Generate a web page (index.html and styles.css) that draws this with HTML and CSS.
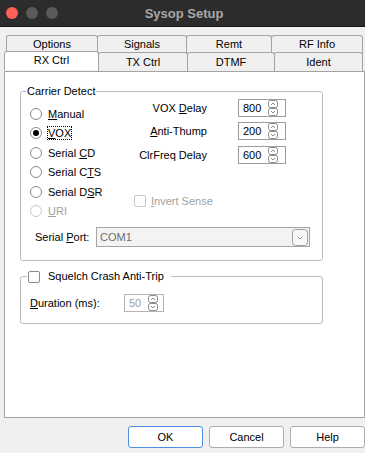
FILE: index.html
```html
<!DOCTYPE html>
<html lang="en">
<head>
    <meta charset="UTF-8">
    <title>Sysop Setup</title>
    <link rel="stylesheet" href="styles.css">
</head>
<body>
<div class="titlebar">
    <div class="lights">
        <span class="light red"></span>
        <span class="light"></span>
        <span class="light"></span>
    </div>
    <div class="title">Sysop Setup</div>
</div>

<div class="tabs">
    <div class="tab-row back">
        <div class="tab w-options">Options</div>
        <div class="tab w-signals">Signals</div>
        <div class="tab w-remt">Remt</div>
        <div class="tab w-rfinfo">RF Info</div>
    </div>
    <div class="tab-row front">
        <div class="tab active w-rx">RX Ctrl</div>
        <div class="tab w-tx">TX Ctrl</div>
        <div class="tab w-dtmf">DTMF</div>
        <div class="tab w-ident">Ident</div>
    </div>
</div>

<div class="panel">
    <fieldset class="group carrier">
        <legend>Carrier Detect</legend>
        <div class="cd-body">
            <div class="radios">
                <div class="radio-row"><span class="radio"></span><span><u>M</u>anual</span></div>
                <div class="radio-row"><span class="radio on"></span><span class="focus"><u>V</u>OX</span></div>
                <div class="radio-row"><span class="radio"></span><span>Serial <u>C</u>D</span></div>
                <div class="radio-row"><span class="radio"></span><span>Serial C<u>T</u>S</span></div>
                <div class="radio-row"><span class="radio"></span><span>Serial D<u>S</u>R</span></div>
                <div class="radio-row disabled"><span class="radio"></span><span><u>U</u>RI</span></div>
            </div>
            <div class="delays">
                <div class="delay-row">
                    <span class="delay-label">VOX <u>D</u>elay</span>
                    <div class="spin"><span>800</span><svg class="arrows" width="10" height="16" viewBox="0 0 10 16"><rect x="0.5" y="0.5" width="9" height="7" rx="2"/><rect x="0.5" y="8.5" width="9" height="7" rx="2"/><path d="M3 5l2-2 2 2M3 11l2 2 2-2"/></svg></div>
                </div>
                <div class="delay-row">
                    <span class="delay-label"><u>A</u>nti-Thump</span>
                    <div class="spin"><span>200</span><svg class="arrows" width="10" height="16" viewBox="0 0 10 16"><rect x="0.5" y="0.5" width="9" height="7" rx="2"/><rect x="0.5" y="8.5" width="9" height="7" rx="2"/><path d="M3 5l2-2 2 2M3 11l2 2 2-2"/></svg></div>
                </div>
                <div class="delay-row">
                    <span class="delay-label">ClrFreq Delay</span>
                    <div class="spin"><span>600</span><svg class="arrows" width="10" height="16" viewBox="0 0 10 16"><rect x="0.5" y="0.5" width="9" height="7" rx="2"/><rect x="0.5" y="8.5" width="9" height="7" rx="2"/><path d="M3 5l2-2 2 2M3 11l2 2 2-2"/></svg></div>
                </div>
                <div class="check-row disabled invert"><span class="check"></span><span><u>I</u>nvert Sense</span></div>
            </div>
        </div>
        <div class="port-row">
            <span class="port-label">Serial <u>P</u>ort:</span>
            <div class="combo">
                <span>COM1</span>
                <svg class="drop" width="16" height="17" viewBox="0 0 16 17"><rect x="0.5" y="0.5" width="15" height="16" rx="3"/><path d="M5.5 7.5l2.5 2.5 2.5-2.5"/></svg>
            </div>
        </div>
    </fieldset>

    <fieldset class="group squelch">
        <legend><span class="check"></span><span>Squelch Crash Anti-Trip</span></legend>
        <div class="duration-row">
            <span class="duration-label"><u>D</u>uration (ms):</span>
            <div class="spin small disabled"><span>50</span><svg class="arrows" width="10" height="16" viewBox="0 0 10 16"><rect x="0.5" y="0.5" width="9" height="7" rx="2"/><rect x="0.5" y="8.5" width="9" height="7" rx="2"/><path d="M3 5l2-2 2 2M3 11l2 2 2-2"/></svg></div>
        </div>
    </fieldset>
</div>

<div class="buttons">
    <div class="btn default">OK</div>
    <div class="btn">Cancel</div>
    <div class="btn">Help</div>
</div>
</body>
</html>
```

FILE: styles.css
```css
* {
    margin: 0;
    padding: 0;
    box-sizing: border-box;
}

body {
    width: 365px;
    height: 453px;
    overflow: hidden;
    background-color: #f0f0f0;
    font: 11px "Liberation Sans", Arial, sans-serif;
    color: #000;
}

u {
    text-decoration: underline;
    text-underline-offset: 1px;
}

/* window title bar */
.titlebar {
    height: 27px;
    background-color: #2c2c2c;
    border-bottom: 1px solid #171717;
    display: grid;
    grid-template-columns: 1fr auto 1fr;
    align-items: center;
}

.lights {
    display: flex;
    gap: 8px;
    padding-left: 6px;
}

.light {
    width: 12px;
    height: 12px;
    border-radius: 50%;
    background-color: #5a5a5a;
}

.light.red {
    background-color: #fe5f57;
}

.title {
    font: bold 13px "Liberation Sans", Arial, sans-serif;
    color: #a8a8a8;
    padding-left: 3px;
}

/* tabs */
.tabs {
    padding: 8px 0 0 4px;
}

.tab-row {
    display: flex;
}

.tab-row.back {
    height: 17px;
    padding-left: 2px;
}

.tab-row.front {
    height: 19px;
    align-items: flex-start;
}

.tab {
    height: 18px;
    border: 1px solid #a3a3a3;
    border-bottom: none;
    border-radius: 3px 3px 0 0;
    background-color: #f0f0f0;
    display: flex;
    align-items: center;
    justify-content: center;
}

.tab-row.back .tab {
    padding-bottom: 1px;
}

.tab-row.front .tab {
    height: 19px;
}

.tab + .tab {
    margin-left: -1px;
}

.tab.active {
    height: 21px;
    margin-top: -1px;
    background-color: #fff;
    position: relative;
    z-index: 1;
    padding-bottom: 2px;
}

.w-options { width: 92px; }
.w-signals { width: 90px; }
.w-remt { width: 86px; }
.w-rfinfo { width: 92px; }
.w-rx { width: 95px; }
.w-tx { width: 90px; }
.w-dtmf { width: 88px; }
.w-ident { width: 89px; }

/* tab page */
.panel {
    width: 361px;
    height: 347px;
    margin-left: 4px;
    background-color: #fff;
    border: 1px solid #a3a3a3;
    padding-top: 13px;
}

.group {
    width: 303px;
    margin-left: 15px;
    border: 1px solid #bcbcbc;
    border-radius: 3px;
    padding: 0;
}

.group legend {
    margin-left: 5px;
    padding: 0 1px;
    line-height: 13px;
}

.cd-body {
    display: flex;
}

.radios {
    width: 100px;
    padding: 6px 0 0 9px;
}

.radio-row {
    height: 19.5px;
    display: flex;
    align-items: center;
    gap: 6px;
}

.radio {
    width: 12px;
    height: 12px;
    border: 1px solid #8a8a8a;
    border-radius: 50%;
    background-color: #fff;
    display: flex;
    align-items: center;
    justify-content: center;
}

.radio.on::after {
    content: "";
    width: 6px;
    height: 6px;
    border-radius: 50%;
    background-color: #000;
}

.disabled {
    color: #a0a0a0;
}

.disabled .radio,
.disabled .check {
    border-color: #c8c8c8;
}

.focus {
    outline: 1px dotted #000;
    outline-offset: 0;
    line-height: 12px;
}

.delays {
    margin-top: -2px;
}

.delay-row {
    height: 23.5px;
    display: grid;
    grid-template-columns: 86px 48px;
    column-gap: 31px;
    align-items: center;
}

.delay-label {
    text-align: right;
}

.spin {
    height: 18px;
    border: 1px solid #9c9c9c;
    background-color: #fff;
    display: flex;
    align-items: center;
    justify-content: space-between;
    padding: 0 7px 0 4px;
}

.spin.small {
    width: 40px;
    padding: 0 5px 0 4px;
}

.spin.disabled {
    border-color: #b4b4b4;
}

.arrows {
    fill: none;
    stroke: #8a8a8a;
    stroke-width: 1;
}

.check-row {
    display: flex;
    align-items: center;
}

.check {
    width: 12px;
    height: 12px;
    border: 1px solid #8a8a8a;
    border-radius: 2px;
    background-color: #fff;
}

.invert {
    height: 20px;
    margin: 24.5px 0 0 13px;
    gap: 5px;
}

.port-row {
    height: 20px;
    margin: 6px 0 13px;
    padding-left: 14px;
    display: flex;
    align-items: center;
}

.port-label {
    width: 61px;
}

.combo {
    width: 214px;
    height: 20px;
    border: 1px solid #a6a6a6;
    background-color: #f3f3f3;
    color: #6d6d6d;
    display: flex;
    align-items: center;
    justify-content: space-between;
    padding: 0 1px 0 3px;
}

.drop {
    fill: #f7f7f7;
    stroke: #a0a0a0;
}

.drop path {
    fill: none;
    stroke: #9a9a9a;
}

.squelch {
    margin-top: 9px;
}

.squelch legend {
    margin-left: 6px;
    padding: 0 7px 0 1px;
    display: flex;
    align-items: center;
}

.squelch legend .check {
    margin-right: 8px;
}

.duration-row {
    height: 18px;
    margin: 11px 0 11px;
    padding-left: 9px;
    display: flex;
    align-items: center;
}

.duration-label {
    width: 94px;
}

/* dialog buttons */
.buttons {
    display: flex;
    justify-content: flex-end;
    gap: 6px;
    margin-top: 8px;
}

.btn {
    width: 75px;
    height: 22px;
    border: 1px solid #adadad;
    border-radius: 3px;
    background-color: #fff;
    display: flex;
    align-items: center;
    justify-content: center;
}

.btn.default {
    border-color: #4a90e2;
}
```
